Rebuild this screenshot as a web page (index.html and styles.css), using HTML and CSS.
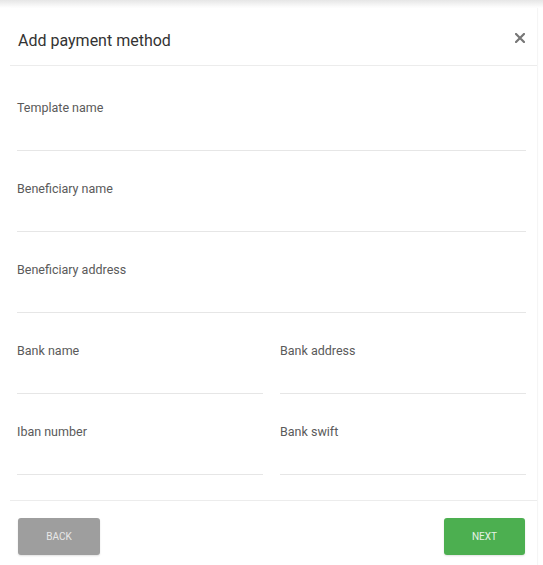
FILE: index.html
```html
<!DOCTYPE html>
<html lang="en">
<head>
    <meta charset="UTF-8">
    <meta name="viewport" content="width=device-width, initial-scale=1.0">
    <title>Add payment method</title>
    <link rel="stylesheet" href="styles.css">
</head>
<body>

<div class="top-shade"></div>

<div class="dialog">
    <div class="dialog-header">
        <h2>Add payment method</h2>
        <button type="button" class="close-button" aria-label="Close">
            <svg width="10" height="10" viewBox="0 0 10 10">
                <path d="M1 1 L9 9 M9 1 L1 9" stroke="#777" stroke-width="2.2" stroke-linecap="square"/>
            </svg>
        </button>
    </div>

    <form id="paymentMethodForm" class="dialog-body">
        <div class="form-group">
            <label for="templateName">Template name</label>
            <input type="text" id="templateName" name="templateName">
        </div>
        <div class="form-group">
            <label for="beneficiaryName">Beneficiary name</label>
            <input type="text" id="beneficiaryName" name="beneficiaryName">
        </div>
        <div class="form-group">
            <label for="beneficiaryAddress">Beneficiary address</label>
            <input type="text" id="beneficiaryAddress" name="beneficiaryAddress">
        </div>
        <div class="form-row">
            <div class="form-group">
                <label for="bankName">Bank name</label>
                <input type="text" id="bankName" name="bankName">
            </div>
            <div class="form-group">
                <label for="bankAddress">Bank address</label>
                <input type="text" id="bankAddress" name="bankAddress">
            </div>
        </div>
        <div class="form-row">
            <div class="form-group">
                <label for="ibanNumber">Iban number</label>
                <input type="text" id="ibanNumber" name="ibanNumber">
            </div>
            <div class="form-group">
                <label for="bankSwift">Bank swift</label>
                <input type="text" id="bankSwift" name="bankSwift">
            </div>
        </div>
    </form>

    <div class="dialog-footer">
        <button type="button" class="btn btn-back">Back</button>
        <button type="submit" form="paymentMethodForm" class="btn btn-next">Next</button>
    </div>
</div>

</body>
</html>
```

FILE: styles.css
```css
body {
    font-family: Roboto, "Liberation Sans", Arial, sans-serif;
    margin: 0;
    background-color: #fff;
    color: #333;
}
.top-shade {
    height: 8px;
    background: linear-gradient(#e6e6e6, #fff);
}
.dialog {
    margin: 0 6px 0 10px;
    background: #fff;
    box-shadow: 1px 0 1px rgba(0, 0, 0, 0.04);
}
.dialog-header {
    display: flex;
    align-items: center;
    justify-content: space-between;
    height: 57px;
    padding: 0 12px 0 8px;
    border-bottom: 1px solid #ececec;
}
.dialog-header h2 {
    margin: 0;
    padding-top: 8px;
    font-size: 16px;
    font-weight: 400;
    color: #333;
}
.close-button {
    display: flex;
    border: none;
    background: none;
    padding: 0;
    margin-top: 2px;
    cursor: pointer;
}
.dialog-body {
    padding: 4px 11px 0 7px;
}
.form-row {
    display: grid;
    grid-template-columns: 1fr 1fr;
    column-gap: 17px;
}
.form-group {
    padding-top: 31px;
}
.form-group label {
    display: block;
    height: 14px;
    line-height: 14px;
    font-size: 12.5px;
    color: #5a5a5a;
}
.form-group input {
    display: block;
    width: 100%;
    box-sizing: border-box;
    height: 36px;
    border: none;
    border-bottom: 1px solid #e6e6e6;
    outline: none;
    padding: 0;
    font: inherit;
}
.dialog-footer {
    display: flex;
    justify-content: space-between;
    margin-top: 25px;
    padding: 17px 12px 10px 8px;
    border-top: 1px solid #ececec;
}
.btn {
    width: 82px;
    height: 37px;
    border: none;
    border-radius: 3px;
    font-family: inherit;
    font-size: 10px;
    text-transform: uppercase;
    color: #e6f2e6;
    cursor: pointer;
    box-shadow: 0 1px 2px rgba(0, 0, 0, 0.12);
}
.btn-back {
    background-color: #9e9e9e;
    color: #e8e8e8;
}
.btn-next {
    width: 81px;
    background-color: #4caf50;
}
```
